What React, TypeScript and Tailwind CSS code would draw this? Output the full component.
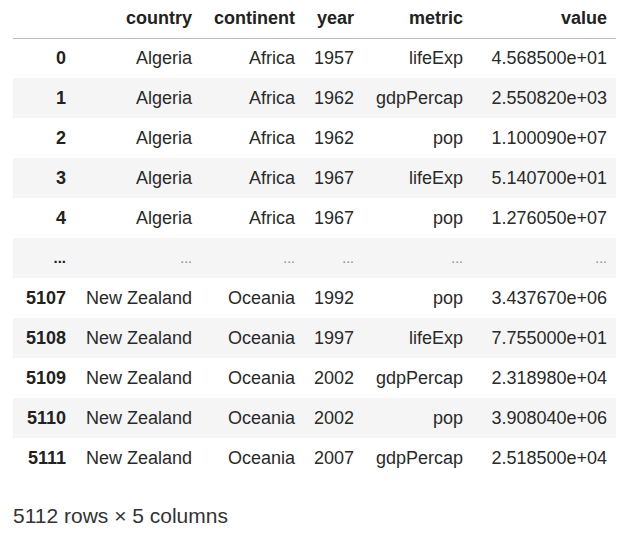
const columns = ["country", "continent", "year", "metric", "value"];

type Row = { idx: string; cells: string[]; ellipsis?: boolean };

const rows: Row[] = [
  { idx: "0", cells: ["Algeria", "Africa", "1957", "lifeExp", "4.568500e+01"] },
  { idx: "1", cells: ["Algeria", "Africa", "1962", "gdpPercap", "2.550820e+03"] },
  { idx: "2", cells: ["Algeria", "Africa", "1962", "pop", "1.100090e+07"] },
  { idx: "3", cells: ["Algeria", "Africa", "1967", "lifeExp", "5.140700e+01"] },
  { idx: "4", cells: ["Algeria", "Africa", "1967", "pop", "1.276050e+07"] },
  { idx: "...", cells: ["...", "...", "...", "...", "..."], ellipsis: true },
  { idx: "5107", cells: ["New Zealand", "Oceania", "1992", "pop", "3.437670e+06"] },
  { idx: "5108", cells: ["New Zealand", "Oceania", "1997", "lifeExp", "7.755000e+01"] },
  { idx: "5109", cells: ["New Zealand", "Oceania", "2002", "gdpPercap", "2.318980e+04"] },
  { idx: "5110", cells: ["New Zealand", "Oceania", "2002", "pop", "3.908040e+06"] },
  { idx: "5111", cells: ["New Zealand", "Oceania", "2007", "gdpPercap", "2.518500e+04"] },
];

const widths = ["w-[126px]", "w-[103px]", "w-[59px]", "w-[109px]", "w-[144px]"];

export default function App() {
  return (
    <div className="bg-white min-h-[538px] pl-[13px] font-['Liberation_Sans',Arial,sans-serif] text-[18px] text-[#2a2a2a]">
      <table className="border-collapse table-fixed w-[603px]">
        <thead>
          <tr className="h-[38px] border-b border-[#bdbdbd]">
            <th className="w-[62px]"></th>
            {columns.map((c, i) => (
              <th key={c} className={`${widths[i]} text-right pr-[9px] font-bold text-[#222]`}>
                {c}
              </th>
            ))}
          </tr>
        </thead>
        <tbody>
          {rows.map((r, i) => (
            <tr key={r.idx} className={`h-[40px] ${i % 2 === 1 ? "bg-[#f5f5f5]" : "bg-white"}`}>
              <th
                className={`text-right pr-[9px] font-bold text-[#222] ${r.ellipsis ? "text-[15px]" : ""}`}
              >
                {r.idx}
              </th>
              {r.cells.map((c, j) => (
                <td
                  key={j}
                  className={`text-right pr-[9px] whitespace-nowrap ${r.ellipsis ? "text-[#888] text-[14px]" : ""}`}
                >
                  {c}
                </td>
              ))}
            </tr>
          ))}
        </tbody>
      </table>
      <p className="mt-[22px] text-[21px] text-[#333]">5112 rows × 5 columns</p>
    </div>
  );
}
